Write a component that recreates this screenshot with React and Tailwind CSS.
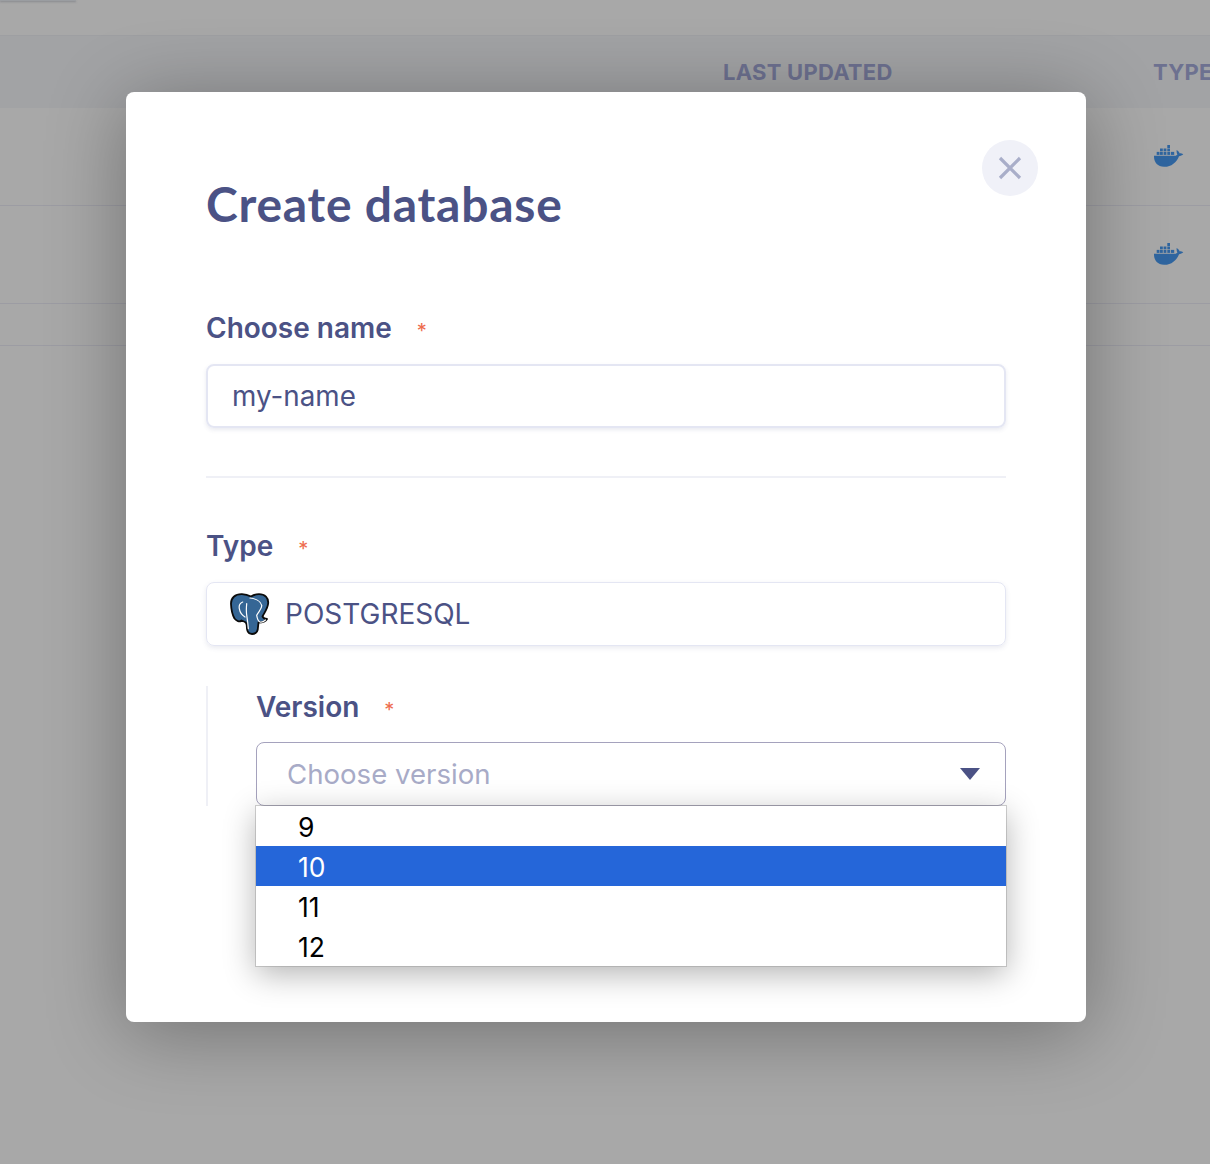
import React from "react";

const ink = "text-[#4b5285]";

function Label({ children }) {
  return (
    <div className={`flex items-center text-[28px] leading-8 font-semibold ${ink}`}>
      <span>{children}</span>
      <span className="ml-[25px] mt-[5px] text-[20px] leading-none font-normal text-[#ee6c4d]">*</span>
    </div>
  );
}

function Elephant() {
  return (
    <svg width="40" height="42" viewBox="0 0 40 42" className="shrink-0">
      <path
        d="M12 1.200C5 1 .8 5 1 11c.2 5 1.500 11 3.500 14.500 2 2.500 5 4 7 2l2.500 1c2 .5 2.500 1.500 2.700 3.500.1 4 .3 9 5.300 9s6-3 6-7l.5-4.500c3.500 0 7-1 8.500-3.500-2.500 0-3.500-.5-4.500-2.500 2-4 5.500-8.500 5.700-13.500C38.500 5 35 1.200 29 1.200c-3 0-6 1-8 2.300-3-1.500-6-2.200-9-2.300Z"
        fill="#356695"
        stroke="#0b0b0b"
        strokeWidth="1.800"
        strokeLinejoin="round"
      />
      <path
        d="M12.700 9c-2.500 1-3.900 3.700-3.400 6.700.5 3 2.500 6.500 5.700 8.300M16.700 10.700c-.4 4-.6 8 .1 12 .5 3.500 1.200 8 1.500 13M20 5c5 .5 10.500 3 11.700 7.300.6 3.500-3.500 6.500-5 10 .5 3 1.500 6 3.300 6.700 2 .6 4-.7 5.500-2"
        fill="none"
        stroke="#ffffff"
        strokeWidth="1.200"
        strokeLinecap="round"
        strokeLinejoin="round"
      />
    </svg>
  );
}

function DockerIcon() {
  return (
    <svg width="30" height="22" viewBox="0 0 30 22" fill="#2f659f">
      <rect x="13.300" y="0" width="2.700" height="3" />
      <rect x="6" y="3.500" width="2.800" height="2.800" />
      <rect x="9.600" y="3.500" width="2.800" height="2.800" />
      <rect x="13.300" y="3.500" width="2.700" height="2.800" />
      <rect x="2.700" y="6.900" width="2.800" height="3" />
      <rect x="6" y="6.900" width="2.800" height="3" />
      <rect x="9.600" y="6.900" width="2.800" height="3" />
      <rect x="13.300" y="6.900" width="2.700" height="3" />
      <rect x="16.800" y="6.900" width="3.400" height="3" />
      <path d="M0 10.800h21.800c.8 0 1.500-.4 1.500-1.200-.6-1.500-.9-3.200-.6-4.600 1.400.7 2.600 2 3 3.400.8-.2 1.800 0 3.600.9-1.200 1.200-2.800 1.800-4.300 1.900C22.700 17.500 17 22 10 21.800 3.500 21.600-.2 17.500 0 10.800Z" />
    </svg>
  );
}

function Row() {
  return (
    <div className="h-[98px] border-b border-[#9c9ca3] flex">
      <div className="w-[1154px] shrink-0" />
      <div className="pt-[37px]">
        <DockerIcon />
      </div>
    </div>
  );
}

export default function App() {
  return (
    <div className="relative h-[1164px] w-[1210px] overflow-hidden bg-[#a8a8a8] font-['Inter',sans-serif]">
      <div className="h-[36px] relative border-b border-[#9e9fa2]">
        <div className="absolute left-0 top-0 h-[1px] w-[76px] bg-[#9a9da1] shadow-[0_1px_2px_rgba(80,85,100,0.5)]" />
      </div>
      <div className="h-[72px] bg-[#a2a3a5] flex items-center text-[22px] font-bold tracking-[0.25px] text-[#6d7190]">
        <div className="w-[723px] shrink-0" />
        <div className="w-[430px] shrink-0 whitespace-nowrap">LAST UPDATED</div>
        <div>TYPE</div>
      </div>
      <Row />
      <Row />
      <div className="h-[42px] border-b border-[#9c9ca3]" />

      <div className="absolute left-[126px] top-[92px] w-[960px] h-[930px] rounded-lg bg-white px-20 shadow-[0_10px_80px_rgba(0,0,0,0.33)]">
        <button className="absolute right-[48px] top-[48px] w-14 h-14 rounded-full bg-[#f0f1f8] flex items-center justify-center">
          <svg width="24" height="24" viewBox="0 0 24 24" stroke="#a9aec9" strokeWidth="3.200" fill="none">
            <path d="M2 2 22 22M22 2 2 22" />
          </svg>
        </button>

        <h1 className={`pt-[83px] text-[48px] leading-[58px] font-bold font-['Lato',sans-serif] tracking-[0.75px] ${ink}`}>Create database</h1>

        <div className="mt-[79px]"><Label>Choose name</Label></div>
        <div className={`mt-5 h-16 rounded-lg border-2 border-[#e4e6f3] flex items-center pl-[24px] pt-px text-[27.8px] shadow-[0_2px_4px_rgba(75,82,133,0.12)] ${ink}`}>
          my-name
        </div>

        <div className="mt-[48px] h-[2px] bg-[#eff0f6]" />

        <div className="mt-[52px]"><Label>Type</Label></div>
        <div className={`mt-5 h-16 rounded-lg border border-[#e4e6f3] flex items-center pl-[23px] gap-[15px] text-[28px] shadow-[0_2px_5px_rgba(75,82,133,0.12)] ${ink}`}>
          <Elephant />
          <span>POSTGRESQL</span>
        </div>

        <div className="relative mt-10 h-[120px] border-l-2 border-[#eff0f6] pl-[48px]">
          <div className="pt-[5px]"><Label>Version</Label></div>
          <div className="mt-[19px] h-16 rounded-lg border border-[#a5a2bd] flex items-center justify-between pl-[30px] pr-[25px] text-[27.6px] text-[#a8abc7]">
            <span className="pt-0.5">Choose version</span>
            <svg width="20" height="12" viewBox="0 0 20 12"><path d="M0 0h20L10 12Z" fill="#4b5285" /></svg>
          </div>
          <ul className="absolute left-[48px] top-[120px] w-[750px] h-40 bg-white text-[26.5px] leading-10 text-black shadow-[0_0_0_1px_rgba(150,150,150,0.45),0_8px_30px_rgba(0,0,0,0.3)]">
            <li className="h-10 pl-[42px] pt-px">9</li>
            <li className="h-10 pl-[42px] pt-px bg-[#2566d9] text-white">10</li>
            <li className="h-10 pl-[42px] pt-px">11</li>
            <li className="h-10 pl-[42px] pt-px">12</li>
          </ul>
        </div>
      </div>
    </div>
  );
}
